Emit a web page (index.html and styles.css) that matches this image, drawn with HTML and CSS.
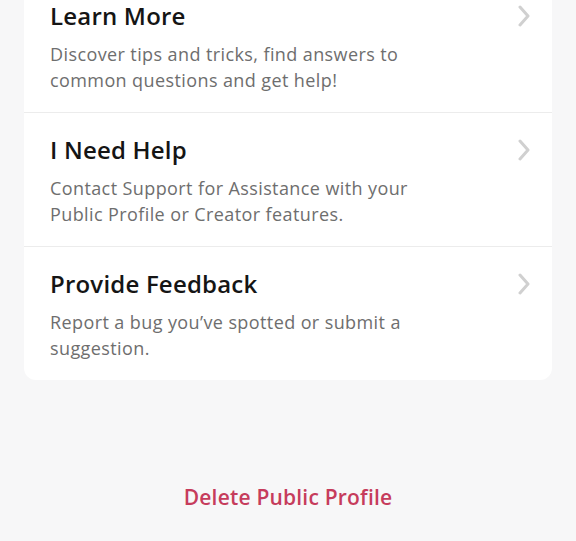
FILE: index.html
```html
<!DOCTYPE html>
<html lang="en">
<head>
  <meta charset="UTF-8">
  <title>Public Profile Settings</title>
  <link rel="stylesheet" href="styles.css">
</head>
<body>

  <div class="page">
    <div class="card">
      <a class="item" href="#">
        <div class="item-head">
          <span class="item-title">Learn More</span>
          <svg class="chevron" viewBox="0 0 12 22" width="12" height="22"><path d="M2 2 L10 11 L2 20" /></svg>
        </div>
        <p class="item-desc">Discover tips and tricks, find answers to<br>common questions and get help!</p>
      </a>
      <a class="item" href="#">
        <div class="item-head">
          <span class="item-title">I Need Help</span>
          <svg class="chevron" viewBox="0 0 12 22" width="12" height="22"><path d="M2 2 L10 11 L2 20" /></svg>
        </div>
        <p class="item-desc">Contact Support for Assistance with your<br>Public Profile or Creator features.</p>
      </a>
      <a class="item" href="#">
        <div class="item-head">
          <span class="item-title">Provide Feedback</span>
          <svg class="chevron" viewBox="0 0 12 22" width="12" height="22"><path d="M2 2 L10 11 L2 20" /></svg>
        </div>
        <p class="item-desc">Report a bug you’ve spotted or submit a<br>suggestion.</p>
      </a>
    </div>

    <button class="delete-btn">Delete Public Profile</button>
  </div>

</body>
</html>
```

FILE: styles.css
```css
body {
  margin: 0;
  background: #f7f7f8;
  font-family: "Open Sans", "Noto Sans", sans-serif;
}
.page {
  margin-top: -21px;
  padding: 0 24px;
}
.card {
  background: #fff;
  border-radius: 12px;
  overflow: hidden;
}
.item {
  display: block;
  padding: 22px 22px 19px 26px;
  border-bottom: 1px solid #ececec;
  text-decoration: none;
}
.item:last-child {
  border-bottom: none;
}
.item-head {
  display: flex;
  justify-content: space-between;
  align-items: center;
}
.item-title {
  font-size: 24px;
  line-height: 30px;
  font-weight: 600;
  letter-spacing: 0.2px;
  color: #151515;
}
.chevron {
  fill: none;
  stroke: #d0d0d0;
  stroke-width: 3;
  stroke-linecap: round;
  stroke-linejoin: round;
}
.item-desc {
  margin: 10px 0 0;
  font-size: 18px;
  line-height: 26px;
  letter-spacing: 0.4px;
  color: #6e6e6e;
}
.delete-btn {
  display: block;
  margin: 103px auto 0;
  padding: 0;
  border: none;
  background: none;
  font-family: inherit;
  font-size: 21px;
  line-height: 28px;
  font-weight: 600;
  letter-spacing: 0.2px;
  color: #c63c5c;
}
```
